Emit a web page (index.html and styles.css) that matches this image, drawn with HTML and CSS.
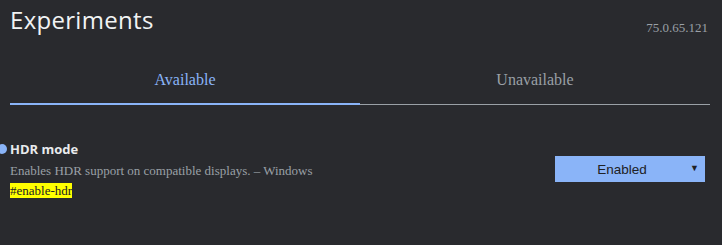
FILE: index.html
```html
<!DOCTYPE html>
<html>
<head>
<meta charset="utf-8">
<link rel="stylesheet" href="styles.css">
</head>
<body>
<div class="page">
  <header class="header">
    <h1 class="title">Experiments</h1>
    <span class="version">75.0.65.121</span>
  </header>
  <nav class="tabs">
    <div class="tab tab-active">Available</div>
    <div class="tab">Unavailable</div>
  </nav>
  <section class="experiment">
    <div class="exp-text">
      <h2 class="exp-name"><span class="dot"></span>HDR mode</h2>
      <p class="exp-desc">Enables HDR support on compatible displays. – Windows</p>
      <p class="exp-link"><span class="hl">#enable-hdr</span></p>
    </div>
    <div class="select">
      <span class="select-label">Enabled</span>
      <span class="select-arrow">▼</span>
    </div>
  </section>
</div>
</body>
</html>
```
FILE: styles.css
```css
html, body {
  margin: 0;
  padding: 0;
  background: #292a2e;
}
.page {
  width: 722px;
  height: 245px;
  overflow: hidden;
  font-family: "Liberation Serif", serif;
}
.header {
  display: flex;
  justify-content: space-between;
  align-items: flex-start;
  padding: 0 14px 0 10px;
}
.title {
  margin: 4px 0 0 0;
  font-family: "Open Sans", sans-serif;
  font-weight: 400;
  font-size: 24px;
  line-height: 32px;
  color: #f1f3f4;
  letter-spacing: 0.3px;
}
.version {
  margin-top: 20px;
  font-size: 13px;
  color: #9aa0a6;
}
.tabs {
  display: flex;
  margin: 24px 12px 0 10px;
  border-bottom: 1px solid #9aa0a6;
}
.tab {
  flex: 1;
  text-align: center;
  font-size: 16px;
  color: #9aa0a6;
  padding: 11px 0 15px 0;
  line-height: 18px;
}
.tab-active {
  color: #8ab4f8;
  box-shadow: inset 0 -2px 0 #8ab4f8;
  margin-bottom: -1px;
  padding-bottom: 16px;
}
.experiment {
  display: flex;
  justify-content: space-between;
  align-items: flex-start;
  padding: 35px 17px 0 10px;
}
.exp-name {
  position: relative;
  margin: 0;
  font-family: "Open Sans", sans-serif;
  font-weight: 700;
  font-size: 13px;
  line-height: 18px;
  color: #e8eaed;
}
.dot {
  position: absolute;
  left: -13px;
  top: 4px;
  width: 10px;
  height: 10px;
  border-radius: 50%;
  background: #8ab4f8;
}
.exp-desc {
  margin: 5px 0 0 0;
  font-size: 13px;
  line-height: 16px;
  color: #9aa0a6;
}
.exp-link {
  margin: 4px 0 0 0;
  font-size: 13px;
  line-height: 15px;
}
.hl {
  background: #ffff00;
  color: #202124;
}
.select {
  margin-top: 16px;
  width: 150px;
  height: 26px;
  background: #8ab4f8;
  display: flex;
  align-items: center;
  position: relative;
  font-family: "Liberation Sans", sans-serif;
  font-size: 13.5px;
  color: #202124;
}
.select-label {
  flex: 1;
  text-align: center;
  padding-right: 16px;
}
.select-arrow {
  position: absolute;
  right: 6px;
  top: 7px;
  font-size: 9px;
}
```
